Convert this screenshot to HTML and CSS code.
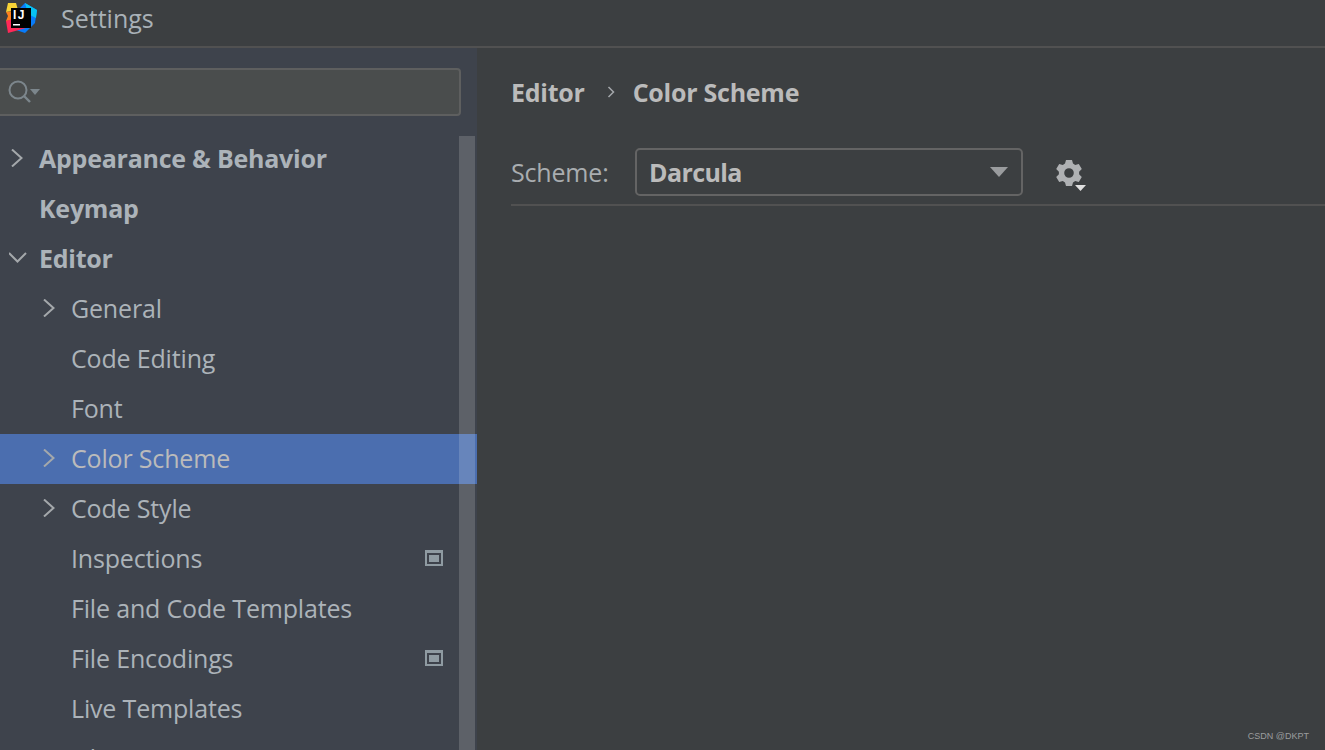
FILE: index.html
```html
<!DOCTYPE html>
<html lang="en">
<head>
    <meta charset="UTF-8">
    <title>Settings</title>
    <link rel="stylesheet" href="styles.css">
</head>
<body>

    <div class="title-bar">
        <svg class="logo" width="34" height="34" viewBox="0 0 34 34">
            <polygon points="21,1 33,8 31,21 21,31 12,28 14,8" fill="#087cfa"/>
            <polygon points="21,1 33,8 32,16 24,12" fill="#07c3f2"/>
            <polygon points="4,1 12,1 14,8 2,10" fill="#f7d336"/>
            <polygon points="2,10 10,9 10,18 2,19 4,14" fill="#fc801d"/>
            <polygon points="2,19 12,16 22,26 4,31" fill="#fe2857"/>
            <rect x="7" y="6" width="20" height="20" fill="#000"/>
            <text class="logo-text" x="9" y="17">IJ</text>
            <rect x="9" y="22" width="7" height="1.500" fill="#fff"/>
        </svg>
        <span class="title">Settings</span>
    </div>

    <div class="content">
        <div class="sidebar">
            <div class="search-box">
                <svg width="34" height="28" viewBox="0 0 34 28">
                    <circle cx="11" cy="12" r="8.5" fill="none" stroke="#7c868c" stroke-width="2"/>
                    <path d="M17 18l6 6" stroke="#7c868c" stroke-width="2.4"/>
                    <path d="M23 11h10l-5 6z" fill="#7c868c"/>
                </svg>
            </div>

            <div class="tree">
                <div class="row bold">
                    <svg class="arrow" width="14" height="18" viewBox="0 0 14 18" preserveAspectRatio="xMinYMid"><path d="M3 .5l9.500 8.500-9.500 8.500"/></svg>
                    Appearance &amp; Behavior
                </div>
                <div class="row bold"><span class="arrow"></span>Keymap</div>
                <div class="row bold">
                    <svg class="arrow" width="18" height="14" viewBox="0 0 18 14" preserveAspectRatio="xMinYMid"><path d="M0 2l8.500 8.500 8.500-8.500"/></svg>
                    Editor
                </div>
                <div class="row child">
                    <svg class="arrow" width="14" height="18" viewBox="0 0 14 18" preserveAspectRatio="xMinYMid"><path d="M3 .5l9.500 8.500-9.500 8.500"/></svg>
                    General
                </div>
                <div class="row child"><span class="arrow"></span>Code Editing</div>
                <div class="row child"><span class="arrow"></span>Font</div>
                <div class="row child selected">
                    <svg class="arrow" width="14" height="18" viewBox="0 0 14 18" preserveAspectRatio="xMinYMid"><path d="M3 .5l9.500 8.500-9.500 8.500"/></svg>
                    Color Scheme
                </div>
                <div class="row child">
                    <svg class="arrow" width="14" height="18" viewBox="0 0 14 18" preserveAspectRatio="xMinYMid"><path d="M3 .5l9.500 8.500-9.500 8.500"/></svg>
                    Code Style
                </div>
                <div class="row child">
                    <span class="arrow"></span>Inspections
                    <span class="project-icon"></span>
                </div>
                <div class="row child"><span class="arrow"></span>File and Code Templates</div>
                <div class="row child">
                    <span class="arrow"></span>File Encodings
                    <span class="project-icon"></span>
                </div>
                <div class="row child"><span class="arrow"></span>Live Templates</div>
                <div class="row child"><span class="arrow"></span>File Types</div>
            </div>

            <div class="scrollbar"></div>
        </div>

        <div class="main">
            <div class="breadcrumb">
                <span>Editor</span>
                <svg width="8" height="14" viewBox="0 0 8 14"><path d="M1.500 2l5 5-5 5"/></svg>
                <span>Color Scheme</span>
            </div>
            <div class="scheme-row">
                <span class="scheme-label">Scheme:</span>
                <div class="scheme-select">
                    <span>Darcula</span>
                    <span class="select-arrow"></span>
                </div>
                <svg class="gear" width="32" height="36" viewBox="0 0 32 36">
                    <path fill="#afb1b3" fill-rule="evenodd" d="M11 3h6l1 3.600 2.200 1.300 3.600-1 3 5.200-2.700 2.600v2.600l2.700 2.600-3 5.200-3.600-1L18 25.400 17 29h-6l-1-3.600-2.200-1.300-3.600 1-3-5.200 2.700-2.600v-2.600L1.200 12.100l3-5.200 3.600 1L10 6.600zM14 11.200a4.800 4.800 0 1 0 0 9.600 4.800 4.800 0 0 0 0-9.600z"/>
                    <path fill="#e0e0e0" d="M20 28h11l-5.500 6z"/>
                </svg>
            </div>
        </div>
    </div>

    <div class="watermark">CSDN @DKPT</div>

</body>
</html>
```

FILE: styles.css
```css
* {
    box-sizing: border-box;
}

html, body {
    height: 100%;
    margin: 0;
}

body {
    background: #3c3f41;
    color: #bbbbbb;
    font-family: "Open Sans", sans-serif;
    font-size: 25px;
    overflow: hidden;
    display: flex;
    flex-direction: column;
}

/*--------------------
Title bar
--------------------*/
.title-bar {
    flex: 0 0 48px;
    display: flex;
    align-items: center;
    padding: 0 0 8px 4px;
    background: #3c3f41;
    border-bottom: 2px solid #515151;
}

.logo {
    overflow: visible;
}

.logo-text {
    font-family: "Liberation Sans", sans-serif;
    font-size: 12px;
    font-weight: 700;
    letter-spacing: 1.5px;
    fill: #fff;
}

.title {
    margin-left: 23px;
    margin-bottom: 2px;
    color: #a9b1b7;
}

/*--------------------
Sidebar
--------------------*/
.content {
    flex: 1 1 auto;
    display: flex;
    min-height: 0;
}

.sidebar {
    flex: 0 0 477px;
    position: relative;
    overflow: hidden;
    background: #3e434c;
    padding-top: 20px;
}

.search-box {
    display: flex;
    align-items: center;
    width: 465px;
    height: 48px;
    margin-left: -4px;
    padding-left: 9px;
    background: #4a4d4d;
    border: 2px solid #5e5f5f;
    border-radius: 4px;
}

.tree {
    margin-top: 18px;
}

.row {
    display: flex;
    align-items: center;
    height: 50px;
    padding-bottom: 2px;
    color: #acb3b9;
    letter-spacing: -0.17px;
}

.row.bold {
    font-weight: 700;
    padding-left: 9px;
    letter-spacing: -0.24px;
}

.row.child {
    padding-left: 41px;
}

.row.selected {
    background: #4b6eaf;
    color: #bbbbbb;
}

.arrow {
    flex: 0 0 auto;
    width: 30px;
    margin-right: 0;
    fill: none;
    stroke: #a4a8ab;
    stroke-width: 2;
}

.project-icon {
    margin-left: auto;
    margin-right: 34px;
    width: 18px;
    height: 16px;
    background: #8f9ba2;
    border: 2px solid #8f9ba2;
    border-top-width: 3px;
    box-shadow: inset 0 0 0 2px #3e434c;
}

.scrollbar {
    position: absolute;
    top: 88px;
    bottom: 0;
    left: 459px;
    width: 16px;
    background: rgba(255, 255, 255, 0.16);
}

/*--------------------
Main panel
--------------------*/
.main {
    flex: 1 1 auto;
    padding: 24px 0 0 34px;
}

.breadcrumb {
    display: flex;
    align-items: center;
    height: 40px;
    font-weight: 700;
    color: #bbbbbb;
    letter-spacing: -0.25px;
}

.breadcrumb svg {
    margin: 0 18px 0 22px;
    fill: none;
    stroke: #a4a8ab;
    stroke-width: 1.500;
}

.scheme-row {
    display: flex;
    align-items: center;
    height: 58px;
    margin-top: 36px;
    padding-bottom: 8px;
    border-bottom: 2px solid #515151;
}

.scheme-label {
    width: 124px;
    color: #a9adb0;
    letter-spacing: -0.17px;
}

.scheme-select {
    display: flex;
    align-items: center;
    justify-content: space-between;
    width: 388px;
    height: 48px;
    padding: 0 13px 0 12px;
    border: 2px solid #646464;
    border-radius: 5px;
    font-weight: 700;
    color: #bbbbbb;
    letter-spacing: -0.6px;
}

.select-arrow {
    width: 0;
    height: 0;
    border-left: 9px solid transparent;
    border-right: 9px solid transparent;
    border-top: 10px solid #9a9c9e;
}

.gear {
    margin-left: 32px;
    margin-top: 6px;
}

.watermark {
    position: absolute;
    right: 16px;
    bottom: 9px;
    font-family: "Liberation Sans", sans-serif;
    font-size: 9px;
    color: #9b9d9e;
}
```
